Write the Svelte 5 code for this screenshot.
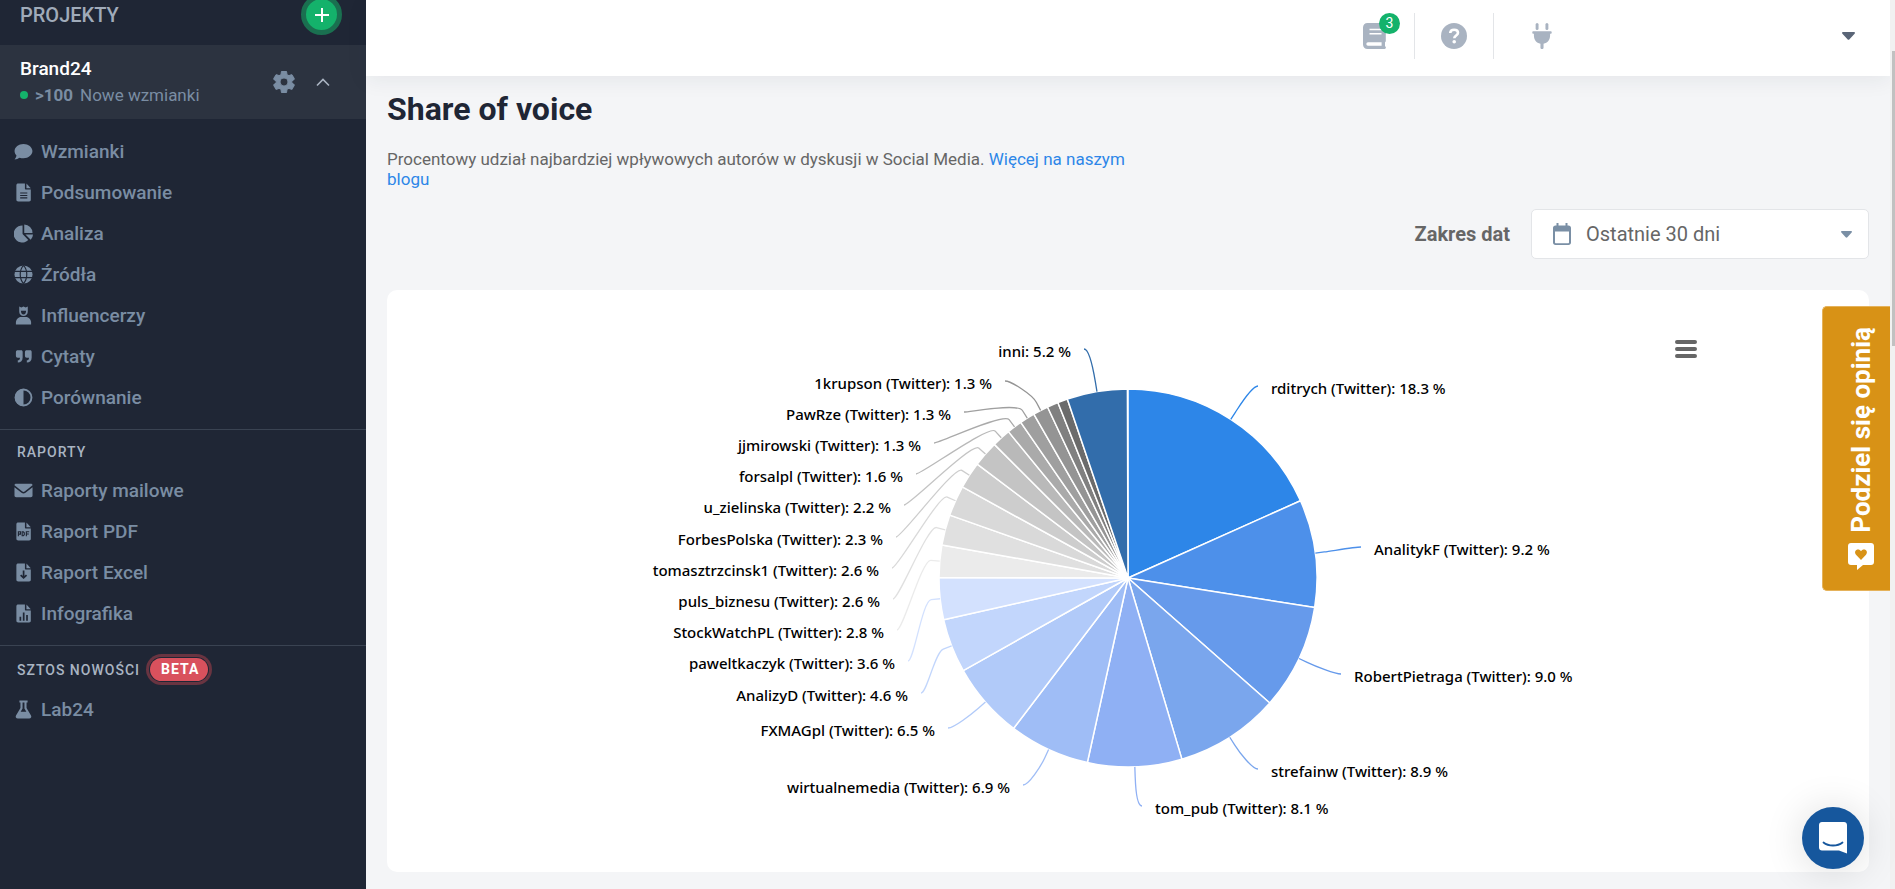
<script>

	const menu = [
		{ name: "Wzmianki", icon: "comment" },
		{ name: "Podsumowanie", icon: "doc" },
		{ name: "Analiza", icon: "pie" },
		{ name: "Źródła", icon: "globe" },
		{ name: "Influencerzy", icon: "person" },
		{ name: "Cytaty", icon: "quote" },
		{ name: "Porównanie", icon: "contrast" }
	]

	const reports = [
		{ name: "Raporty mailowe", icon: "mail" },
		{ name: "Raport PDF", icon: "pdf" },
		{ name: "Raport Excel", icon: "download" },
		{ name: "Infografika", icon: "bars" }
	]

	const news = [{ name: "Lab24", icon: "flask" }]

	// share = slice size in %, x/y = label anchor measured from the pie centre
	const slices = [
		{ label: "rditrych (Twitter): 18.3 %", share: 18.3, color: "#2d86e8", x: 143, y: -184 },
		{ label: "AnalitykF (Twitter): 9.2 %", share: 9.2, color: "#4d90ea", x: 246, y: -23 },
		{ label: "RobertPietraga (Twitter): 9.0 %", share: 9, color: "#669aeb", x: 226, y: 104 },
		{ label: "strefainw (Twitter): 8.9 %", share: 8.9, color: "#7aa6ed", x: 143, y: 199 },
		{ label: "tom_pub (Twitter): 8.1 %", share: 8.05, color: "#8fb0f4", x: 27, y: 236 },
		{ label: "wirtualnemedia (Twitter): 6.9 %", share: 6.9, color: "#9fbdf6", x: -118, y: 215 },
		{ label: "FXMAGpl (Twitter): 6.5 %", share: 6.5, color: "#b1caf9", x: -193, y: 158 },
		{ label: "AnalizyD (Twitter): 4.6 %", share: 4.6, color: "#c2d6fc", x: -220, y: 123 },
		{ label: "paweltkaczyk (Twitter): 3.6 %", share: 3.6, color: "#d3e1fe", x: -233, y: 91 },
		{ label: "StockWatchPL (Twitter): 2.8 %", share: 2.75, color: "#ebebeb", x: -244, y: 60 },
		{ label: "puls_biznesu (Twitter): 2.6 %", share: 2.6, color: "#e0e0e0", x: -248, y: 29 },
		{ label: "tomasztrzcinsk1 (Twitter): 2.6 %", share: 2.6, color: "#d9d9d9", x: -249, y: -2 },
		{ label: "ForbesPolska (Twitter): 2.3 %", share: 2.3, color: "#cdcdcd", x: -245, y: -33 },
		{ label: "u_zielinska (Twitter): 2.2 %", share: 2.2, color: "#c4c4c4", x: -237, y: -65 },
		{ label: "forsalpl (Twitter): 1.6 %", share: 1.6, color: "#b9b9b9", x: -225, y: -96 },
		{ label: "jjmirowski (Twitter): 1.3 %", share: 1.3, color: "#aaaaaa", x: -207, y: -127 },
		{ label: "PawRze (Twitter): 1.3 %", share: 1.3, color: "#9f9f9f", x: -177, y: -158 },
		{ label: "1krupson (Twitter): 1.3 %", share: 1.3, color: "#949494", x: -136, y: -189 },
		{ label: "", share: 0.95, color: "#808080" },
		{ label: "", share: 0.85, color: "#6b6b6b" },
		{ label: "inni: 5.2 %", share: 5.15, color: "#326dab", x: -57, y: -221 }
	]

	const R = 189

	const point = (pct, r) => {
		const a = pct / 100 * Math.PI * 2
		return [Math.sin(a) * r, -Math.cos(a) * r]
	}

	let sum = 0
	const pie = slices.map((s) => {
		const from = sum
		sum += s.share
		const mid = from + s.share / 2
		const side = s.x > 0 ? 1 : -1
		const arc = `M0 0L${point(from, R)}A${R} ${R} 0 0 1 ${point(sum, R)}Z`
		const lx = s.x - side * 13
		const ly = s.y - 8
		const line = s.label
			? `M${lx} ${ly}C${lx - side * 6} ${ly} ${point(mid, R + 18)} ${point(mid, R + 9)}L${point(mid, R)}`
			: ""
		return { ...s, arc, line, anchor: side > 0 ? "start" : "end" }
	})

	let range = "30"
</script>

{#snippet icon(name)}
	<svg class="icon" viewBox="0 0 20 20" aria-hidden="true">
		{#if name === "comment"}
			<path d="M10 2C4.800 2 .6 5.300.6 9.600c0 1.800.8 3.400 2 4.700-.2 1.600-1 2.900-2 4 2 0 3.900-.8 5.300-1.700 1.200.4 2.600.6 4.100.6 5.200 0 9.400-3.400 9.400-7.600S15.200 2 10 2z"/>
		{:else if name === "pie"}
			<path d="M9 1.500V10.500l6 6.300A9 9 0 1 1 9 1.500z"/>
			<path d="M10.800.5a9 9 0 0 1 8.700 8.900h-8.700z"/>
			<path d="M12 11h8a8.500 8.500 0 0 1-2.400 5.600z"/>
		{:else if name === "globe"}
			<circle cx="10" cy="10" r="9.500"/>
			<path class="cut" d="M.5 6.700h19M.5 13.300h19M10 .5c-4.600 5-4.600 14 0 19M10 .5c4.600 5 4.600 14 0 19"/>
		{:else if name === "person"}
			<path d="M5.500.5l2.200 1L10 .5l2.300 1 2.200-1v5.500c0 2.600-2 4.500-4.500 4.500S5.500 8.600 5.500 6z"/>
			<path class="hole" d="M7.300 5h5.400c0 2.600-.9 3.900-2.700 3.900S7.300 7.600 7.300 5z"/>
			<path d="M2 19.500v-2c0-3.400 2.400-6 5.500-6h5c3.100 0 5.500 2.600 5.500 6v2z"/>
		{:else if name === "quote"}
			<path d="M4 3.500h3.500c1 0 1.600.7 1.600 1.700V11c0 3.400-1.900 5.300-5.100 5.300v-2.400c1.500 0 2.300-.9 2.300-2.700H4c-1.300 0-2-.8-2-2V5.400c0-1.200.8-1.900 2-1.900zM13.500 3.500H17c1 0 1.600.7 1.600 1.700V11c0 3.400-1.900 5.300-5.100 5.300v-2.400c1.500 0 2.300-.9 2.300-2.700h-2.300c-1.300 0-2-.8-2-2V5.400c0-1.200.8-1.900 2-1.900z"/>
		{:else if name === "contrast"}
			<circle class="ring" cx="10" cy="10" r="8.400"/>
			<path d="M10 1a9 9 0 0 0 0 18z"/>
		{:else if name === "mail"}
			<path d="M2.200 3h15.600c1 0 1.700.6 1.700 1.500L11.200 11c-.8.600-1.600.6-2.400 0L.5 4.500C.5 3.600 1.200 3 2.200 3z"/>
			<path d="M.5 6.500l7.400 5.800c1.400 1 2.800 1 4.200 0l7.400-5.800v8.700c0 1.200-.8 1.800-1.800 1.800H2.300c-1 0-1.800-.6-1.800-1.800z"/>
		{:else if name === "flask"}
			<path d="M5.700.5h8.600v2.200h-1.100v5.600l4.700 8.100c.9 1.700-.1 3.200-1.900 3.200H4c-1.800 0-2.800-1.500-1.900-3.200l4.700-8.100V2.700H5.700z"/>
			<path class="hole" d="M9 2.700h2v6.200l2 3.400H7l2-3.400z"/>
		{:else}
			<path d="M4.500.5h7v5.200c0 .8.400 1.200 1.200 1.200h5v10.800c0 1.200-.7 1.800-1.800 1.800H4.500c-1.200 0-2-.7-2-1.800V2.300c0-1.200.8-1.800 2-1.800z"/>
			<path d="M13.100.5l4.600 4.900h-4.600z"/>
			{#if name === "doc"}
				<path class="cut" d="M6.500 10.500h7.500M6.500 13.100h7.500M6.500 15.700h7.500"/>
			{:else if name === "pdf"}
				<path class="cut" d="M4.600 15V10.300h2.200v2.500H4.600M8.600 10.300v4.200h1.200l1-1v-2.200l-1-1zM13 15v-4.700h3M13 12.600h2.600"/>
			{:else if name === "download"}
				<path class="cut thick" d="M10.100 8v7.500M7 12.700l3.100 3 3.100-3"/>
			{:else}
				<path class="cut thick" d="M6.700 13.500v4M10.200 9v8.500M13.700 11.500v6"/>
			{/if}
		{/if}
	</svg>
{/snippet}

{#snippet list(items)}
	<ul>
		{#each items as item}
			<li><a href="#{item.icon}">{@render icon(item.icon)}{item.name}</a></li>
		{/each}
	</ul>
{/snippet}

<div class="app">
	<aside>
		<div class="projects">
			<span>PROJEKTY</span>
			<button class="add" aria-label="Dodaj projekt">
				<svg width="16" height="16" viewBox="0 0 16 16"><path d="M8 1v14M1 8h14" stroke="#fff" stroke-width="2"/></svg>
			</button>
		</div>

		<div class="project">
			<div class="info">
				<strong>Brand24</strong>
				<p><i></i><b>&gt;100</b> Nowe wzmianki</p>
			</div>
			<button aria-label="Ustawienia">
				<svg width="22" height="22" viewBox="1.500 1.500 21 21" fill="#7a8da3"><path stroke="#7a8da3" d="M19.430 12.980c.04-.32.07-.64.07-.98s-.03-.66-.07-.98l2.110-1.650c.19-.15.24-.42.12-.64l-2-3.460c-.12-.22-.39-.3-.61-.22l-2.490 1c-.52-.4-1.080-.73-1.690-.98l-.38-2.650C14.460 2.180 14.250 2 14 2h-4c-.25 0-.46.18-.49.42l-.38 2.650c-.61.25-1.170.59-1.690.98l-2.490-1c-.23-.09-.49 0-.61.22l-2 3.460c-.13.22-.07.49.12.64l2.110 1.650c-.04.32-.07.65-.07.98s.03.66.07.98l-2.110 1.650c-.19.15-.24.42-.12.64l2 3.460c.12.22.39.3.61.22l2.490-1c.52.4 1.080.73 1.690.98l.38 2.650c.03.24.24.42.49.42h4c.25 0 .46-.18.49-.42l.38-2.650c.61-.25 1.170-.59 1.690-.98l2.490 1c.23.09.49 0 .61-.22l2-3.460c.12-.22.07-.49-.12-.64zM12 15.800A3.800 3.800 0 1 1 12 8.200a3.800 3.800 0 0 1 0 7.600z"/></svg>
			</button>
			<button aria-label="Zwiń">
				<svg width="14" height="9" viewBox="0 0 14 9" fill="none" stroke="#aab4c2" stroke-width="1.600"><path d="M1 7.500l6-6 6 6"/></svg>
			</button>
		</div>

		<nav>
			{@render list(menu)}
		</nav>
		<nav>
			<h2>RAPORTY</h2>
			{@render list(reports)}
		</nav>
		<nav>
			<h2>SZTOS NOWOŚCI <span class="beta">BETA</span></h2>
			{@render list(news)}
		</nav>
	</aside>

	<div class="page">
		<header>
			<button class="cell" aria-label="Nowości">
				<span class="book">
					<svg width="24" height="26" viewBox="0 0 24 26"><path fill="#a9b3c1" d="M4.500 0H21c1 0 1.800.7 1.800 1.700V18c0 .6-.3 1-.8 1.300v4c.7.3.9.8.9 1.300 0 .8-.5 1.400-1.300 1.400h-17C1.800 26 0 24.200 0 21.500v-17C0 1.800 1.800 0 4.500 0z"/><path d="M6.500 6.500h12M6.500 10.800h12" stroke="#fff" stroke-width="1.500"/><path fill="#fff" d="M5 19.300h13.600v3.400H5a1.700 1.700 0 0 1 0-3.400z"/></svg>
					<em>3</em>
				</span>
			</button>
			<button class="cell" aria-label="Pomoc">
				<svg width="26" height="26" viewBox="0 0 26 26"><circle cx="13" cy="13" r="13" fill="#a9b3c1"/><path d="M9.200 10c.2-2.100 1.700-3.300 3.900-3.300 2.300 0 3.900 1.200 3.900 3.100 0 2.700-3.700 2.700-3.700 5.500" fill="none" stroke="#fff" stroke-width="2.600"/><circle cx="13.200" cy="18.700" r="1.800" fill="#fff"/></svg>
			</button>
			<button class="cell wide" aria-label="Integracje">
				<svg width="20" height="26" viewBox="0 0 22 26" preserveAspectRatio="none" fill="#a9b3c1"><rect x="4" y="0" width="3.200" height="7" rx="1.600"/><rect x="14.800" y="0" width="3.200" height="7" rx="1.600"/><path d="M1.500 8.300h19c.7 0 1.200.4 1.200 1.200s-.5 1.300-1.200 1.300h-.6v1.700c0 4.300-2.700 7.400-7.200 8.200v4c0 .8-.7 1.300-1.700 1.300s-1.700-.5-1.700-1.300v-4c-4.500-.8-7.200-3.900-7.200-8.200v-1.700h-.6c-.7 0-1.200-.5-1.200-1.300s.5-1.200 1.200-1.200z"/></svg>
			</button>
			<button class="account" aria-label="Konto">
				<svg width="13" height="8" viewBox="0 0 13 8"><path d="M1 0h11c1 0 1.300 1 .6 1.700L7.500 7.300c-.6.7-1.400.7-2 0L.4 1.700C-.3 1 0 0 1 0z" fill="#5a6577"/></svg>
			</button>
		</header>

		<main>
			<h1>Share of voice</h1>
			<p class="lead">Procentowy udział najbardziej wpływowych autorów w dyskusji w Social Media. <a href="#blog">Więcej na naszym blogu</a></p>

			<div class="filter">
				<label for="range">Zakres dat</label>
				<div class="select">
					<svg class="cal" width="18" height="22" viewBox="0 0 18 22"><path d="M4.500 0v4M13.500 0v4" stroke="#7a8fa5" stroke-width="2"/><path fill="#7a8fa5" fill-rule="evenodd" d="M2.500 2.500h13c1.500 0 2.500 1 2.500 2.500v14.500c0 1.500-1 2.500-2.500 2.500h-13C1 22 0 21 0 19.500V5c0-1.500 1-2.500 2.500-2.500zM2 8.500v11c0 .4.300.7.700.7h12.600c.4 0 .7-.3.7-.7v-11z"/></svg>
					<select id="range" bind:value={range}>
						<option value="30">Ostatnie 30 dni</option>
					</select>
					<svg class="arrow" width="11" height="7" viewBox="0 0 13 8"><path d="M1 0h11c1 0 1.300 1 .6 1.700L7.500 7.300c-.6.7-1.400.7-2 0L.4 1.700C-.3 1 0 0 1 0z" fill="#7a8fa5"/></svg>
				</div>
			</div>

			<section class="card">
				<button class="burger" aria-label="Menu wykresu">
					<svg width="22" height="18" viewBox="0 0 22 18"><path d="M2 2h18M2 9h18M2 16h18" stroke="#666" stroke-width="4" stroke-linecap="round"/></svg>
				</button>
				<svg class="chart" viewBox="-741 -288 1482 582">
					{#each pie as s}
						<path d={s.arc} fill={s.color} stroke="#fff" stroke-width="1.500" stroke-linejoin="round"/>
					{/each}
					{#each pie.filter((s) => s.label) as s}
						<path d={s.line} fill="none" stroke={s.color} stroke-width="1.300"/>
						<text x={s.x} y={s.y} text-anchor={s.anchor}>{s.label}</text>
					{/each}
				</svg>
			</section>
		</main>
	</div>

	<div class="track"><div class="thumb"></div></div>

	<button class="opinion">
		<span>Podziel się opinią</span>
		<svg width="26" height="27" viewBox="0 0 26 27"><path fill="#fff" d="M3 0h20c1.800 0 3 1.200 3 3v16c0 1.800-1.200 3-3 3h-8l-6 5v-5H3c-1.800 0-3-1.200-3-3V3c0-1.800 1.200-3 3-3z"/><path fill="#d89216" d="M13 17l-5-5.300C6 9.300 7.500 6.500 10 6.500c1.300 0 2.300.6 3 1.700.7-1.100 1.700-1.700 3-1.700 2.500 0 4 2.800 2 5.200z"/></svg>
	</button>

	<button class="chat" aria-label="Czat">
		<svg width="28" height="32" viewBox="0 0 28 32"><path fill="#fff" d="M3 0h22c1.700 0 3 1.200 3 3v28.500L20 28.500H3c-1.700 0-3-1.200-3-3V3c0-1.800 1.300-3 3-3z"/><path d="M4.500 20.500c5 4 14 4 19 0" fill="none" stroke="#16579d" stroke-width="1.800" stroke-linecap="round"/></svg>
	</button>
</div>

<style>

	:global(body){
		background: #f4f5f7;
	}

	*{
		box-sizing: border-box;
		margin: 0;
	}

	button{
		border: 0;
		padding: 0;
		background: none;
		font: inherit;
	}

	svg{
		display: block;
	}

	a{
		text-decoration: none;
	}

	.app{
		display: flex;
		min-height: 100vh;
		font-family: Roboto, sans-serif;
	}

	aside{
		flex: 0 0 366px;
		background: #1f2635;
		color: #7a8da3;
	}

	.projects{
		display: flex;
		align-items: center;
		justify-content: space-between;
		height: 45px;
		padding: 0 24px 16px 20px;
		font-size: 20px;
		font-weight: 500;
		color: #a0abba;
	}

	.add{
		display: grid;
		place-items: center;
		width: 41px;
		height: 41px;
		flex: none;
		border: 5px solid #1a7050;
		border-radius: 50%;
		background: #14b26b;
	}

	.project{
		display: flex;
		align-items: center;
		gap: 21px;
		height: 74px;
		padding: 0 36px 0 20px;
		background: #2c3340;
	}

	.info{
		flex: 1;
	}

	.info strong{
		font-size: 19px;
		line-height: 26px;
		font-weight: 500;
		color: #fff;
	}

	.info p{
		display: flex;
		align-items: center;
		gap: 7px;
		font-size: 17px;
		line-height: 26px;
	}

	.info i{
		width: 8px;
		height: 8px;
		border-radius: 50%;
		background: #14b26b;
	}

	nav{
		padding-bottom: 11px;
	}

	nav:first-of-type{
		padding-top: 12px;
	}

	nav + nav{
		border-top: 1px solid #3a4352;
	}

	h2{
		display: flex;
		align-items: center;
		gap: 10px;
		padding: 12px 17px 8px;
		font-size: 14px;
		line-height: 20px;
		font-weight: 500;
		letter-spacing: 1px;
		color: #a9b4c2;
	}

	.beta{
		padding: 0 9px 0 11px;
		border-radius: 12px;
		background: #d9515d;
		box-shadow: 0 0 0 1px #1f2635, 0 0 0 4px #693441;
		line-height: 23px;
		font-weight: 700;
		color: #fff;
	}

	ul{
		padding: 0;
		list-style: none;
	}

	li a{
		display: flex;
		align-items: center;
		gap: 8px;
		height: 41px;
		padding-left: 14px;
		font-size: 19px;
		font-weight: 500;
		color: #7a8da3;
	}

	.icon{
		width: 19px;
		height: 19px;
		fill: #7a8da3;
	}

	.cut{
		fill: none;
		stroke: #1f2635;
		stroke-width: 1.2;
	}

	.thick{
		stroke-width: 1.8;
	}

	.hole{
		fill: #1f2635;
	}

	.ring{
		fill: none;
		stroke: #7a8da3;
		stroke-width: 2;
	}

	.page{
		flex: 1;
		min-width: 0;
	}

	header{
		display: flex;
		align-items: center;
		justify-content: flex-end;
		height: 76px;
		padding-bottom: 4px;
		background: #fff;
		box-shadow: 0 4px 20px rgba(30, 40, 60, 0.07);
	}

	.cell{
		display: grid;
		place-items: center;
		width: 79px;
		height: 46px;
		border-right: 1px solid #e3e5e8;
	}

	.wide{
		width: 96px;
		border: 0;
	}

	.book{
		position: relative;
	}

	.book em{
		position: absolute;
		left: 16px;
		top: -10px;
		width: 21px;
		height: 21px;
		border-radius: 50%;
		background: #14b26b;
		font-size: 14px;
		line-height: 21px;
		font-style: normal;
		color: #fff;
	}

	.account{
		display: flex;
		justify-content: flex-end;
		align-items: center;
		width: 300px;
		height: 46px;
		padding-right: 35px;
	}

	main{
		padding: 13px 21px 17px;
	}

	h1{
		font-size: 32px;
		line-height: 40px;
		font-weight: 700;
		color: #1f2635;
	}

	.lead{
		max-width: 780px;
		margin-top: 20px;
		font-size: 17px;
		line-height: 20px;
		color: #666;
	}

	.lead a{
		color: #2d86e8;
	}

	.filter{
		display: flex;
		align-items: center;
		justify-content: flex-end;
		gap: 21px;
		margin: 20px 0 31px;
		font-size: 20px;
		color: #666;
	}

	.filter label{
		font-weight: 700;
	}

	.select{
		position: relative;
		width: 338px;
	}

	select{
		width: 100%;
		height: 50px;
		padding: 0 54px;
		border: 1px solid #e3e5e8;
		border-radius: 5px;
		background: #fff;
		appearance: none;
		font: inherit;
		color: #666;
	}

	.cal{
		position: absolute;
		left: 22px;
		top: 14px;
	}

	.arrow{
		position: absolute;
		right: 17px;
		top: 22px;
	}

	.card{
		position: relative;
		border-radius: 10px;
		background: #fff;
	}

	.burger{
		position: absolute;
		right: 172px;
		top: 50px;
	}

	.chart{
		width: 100%;
	}

	.chart text{
		font-family: "Lucida Grande", "Noto Sans", sans-serif;
		font-size: 15px;
		font-weight: 500;
	}

	.track{
		flex: 0 0 5px;
		padding: 51px 0 0 2px;
		background: #f1f1f1;
	}

	.thumb{
		height: 295px;
		background: #c1c1c1;
	}

	.opinion{
		position: fixed;
		right: 5px;
		top: 306px;
		display: flex;
		flex-direction: column;
		align-items: center;
		gap: 10px;
		width: 68px;
		height: 285px;
		padding: 20px 0 20px 8px;
		border: 1px solid #e5b25b;
		border-right: 0;
		border-radius: 5px 0 0 5px;
		background: #d89216;
		color: #fff;
		justify-content: flex-end;
	}

	.opinion span{
		writing-mode: vertical-rl;
		transform: rotate(180deg);
		font-size: 26px;
		line-height: 30px;
		font-weight: 700;
		white-space: nowrap;
	}

	.chat{
		position: fixed;
		right: 31px;
		bottom: 20px;
		display: grid;
		place-items: center;
		width: 62px;
		height: 62px;
		border-radius: 50%;
		background: #16579d;
		box-shadow: 0 2px 40px rgba(0, 0, 0, 0.14);
	}

</style>
